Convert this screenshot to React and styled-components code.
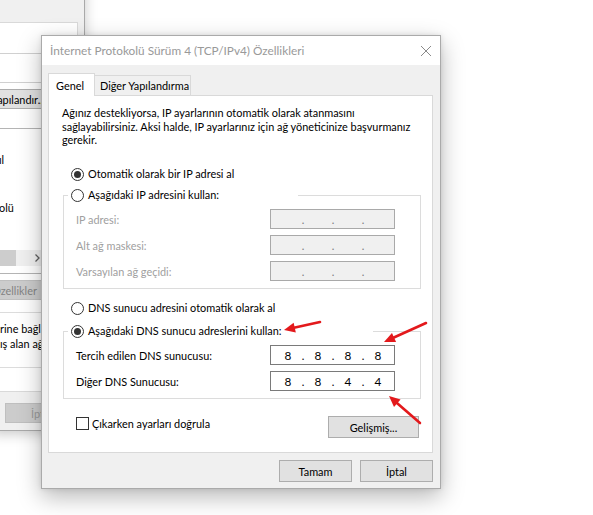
import { Fragment } from 'react'
import styled, { createGlobalStyle } from 'styled-components'

const UI_FONT = `Lato, 'Open Sans', 'Noto Sans', sans-serif`

const GlobalStyle = createGlobalStyle`
  *, *::before, *::after { box-sizing: border-box; }
  html, body { margin: 0; padding: 0; background: #ffffff; }
  body { font-family: ${UI_FONT}; font-size: 10.9px; color: #000; }
`

const ipFields = ['IP adresi:', 'Alt ağ maskesi:', 'Varsayılan ağ geçidi:']

const dnsFields = [
  { label: 'Tercih edilen DNS sunucusu:', octets: ['8', '8', '8', '8'] },
  { label: 'Diğer DNS Sunucusu:', octets: ['8', '8', '4', '4'] },
]

// tails of the adapter items that stick out from under the front dialog
const adapterItems = ['', 'ıl', '', '', 'olü', '']

const annotations = [
  { from: [320, 322], to: [284, 330] },
  { from: [426, 323], to: [384, 342] },
  { from: [420, 423], to: [389, 396] },
]

function Radio({ checked, children }) {
  return (
    <RadioLabel>
      <RadioDot $checked={checked} />
      <span>{children}</span>
    </RadioLabel>
  )
}

function IpField({ octets, disabled }) {
  const parts = octets || ['', '', '', '']
  return (
    <IpBox $disabled={disabled}>
      {parts.map((o, i) => (
        <Fragment key={i}>
          {i > 0 && <IpDot $disabled={disabled}>.</IpDot>}
          <Octet>{o}</Octet>
        </Fragment>
      ))}
    </IpBox>
  )
}

function Arrow({ from, to }) {
  const [x1, y1] = from
  const [x2, y2] = to
  const len = Math.hypot(x2 - x1, y2 - y1)
  const ux = (x2 - x1) / len
  const uy = (y2 - y1) / len
  const head = 11
  const half = 5
  const bx = x2 - ux * head
  const by = y2 - uy * head
  const points = [
    [x2, y2],
    [bx - uy * half, by + ux * half],
    [bx + uy * half, by - ux * half],
  ]
    .map((p) => p.join(','))
    .join(' ')
  return (
    <g>
      <line x1={x1} y1={y1} x2={bx + ux * 2} y2={by + uy * 2} stroke="#e3191c" strokeWidth="2.6" strokeLinecap="round" />
      <polygon points={points} fill="#e3191c" />
    </g>
  )
}

export default function App() {
  return (
    <>
      <GlobalStyle />
      <Desktop>
        <BackWindow>
          <BackPanel>
            <AdapterBox />
            <ConfigureButton>Yapılandır...</ConfigureButton>
            <ListView>
              {adapterItems.map((tail, i) => (
                <ListRow key={i}>{tail}</ListRow>
              ))}
              <HScroll>
                <ScrollThumb />
                <ScrollArrow>
                  <svg width="5" height="8" viewBox="0 0 5 8">
                    <path d="M0.5 0.5 L4 4 L0.5 7.5" fill="none" stroke="#606060" strokeWidth="1.3" />
                  </svg>
                </ScrollArrow>
              </HScroll>
            </ListView>
            <PropertiesButton>Özellikler</PropertiesButton>
            <DescGroup>
              rine bağlı ağlar arasında
              <br />
              ış alan ağ protokolü.
            </DescGroup>
          </BackPanel>
          <BackCancel>İptal</BackCancel>
        </BackWindow>

        <Dialog>
          <TitleBar>
            <Title>İnternet Protokolü Sürüm 4 (TCP/IPv4) Özellikleri</Title>
            <CloseButton>
              <svg width="10" height="10" viewBox="0 0 10 10">
                <path d="M0 0 L10 10 M10 0 L0 10" stroke="#8a8a8a" strokeWidth="1" />
              </svg>
            </CloseButton>
          </TitleBar>

          <Body>
            <Tabs>
              <Tab $active>Genel</Tab>
              <Tab>Diğer Yapılandırma</Tab>
            </Tabs>

            <TabPanel>
              <Intro>
                Ağınız destekliyorsa, IP ayarlarının otomatik olarak atanmasını
                <br />
                sağlayabilirsiniz. Aksi halde, IP ayarlarınız için ağ yöneticinize başvurmanız
                <br />
                gerekir.
              </Intro>

              <OptionRow $gap={19.5}>
                <Radio checked>Otomatik olarak bir IP adresi al</Radio>
              </OptionRow>

              <GroupBox>
                <Legend $width={230}>
                  <Radio>Aşağıdaki IP adresini kullan:</Radio>
                </Legend>
                <FieldList>
                  {ipFields.map((label) => (
                    <FieldRow key={label}>
                      <FieldLabel $disabled>{label}</FieldLabel>
                      <IpField disabled />
                    </FieldRow>
                  ))}
                </FieldList>
              </GroupBox>

              <OptionRow $gap={11}>
                <Radio>DNS sunucu adresini otomatik olarak al</Radio>
              </OptionRow>

              <GroupBox $gap={15}>
                <Legend $width={305}>
                  <Radio checked>Aşağıdaki DNS sunucu adreslerini kullan:</Radio>
                </Legend>
                <FieldList>
                  {dnsFields.map((f) => (
                    <FieldRow key={f.label}>
                      <FieldLabel>{f.label}</FieldLabel>
                      <IpField octets={f.octets} />
                    </FieldRow>
                  ))}
                </FieldList>
              </GroupBox>

              <PanelFooter>
                <CheckLabel>
                  <CheckBox />
                  <span>Çıkarken ayarları doğrula</span>
                </CheckLabel>
                <AdvancedButton>Gelişmiş...</AdvancedButton>
              </PanelFooter>
            </TabPanel>

            <ButtonRow>
              <DialogButton>Tamam</DialogButton>
              <DialogButton>İptal</DialogButton>
            </ButtonRow>
          </Body>
        </Dialog>

        <Overlay width="593" height="515" viewBox="0 0 593 515">
          {annotations.map((a, i) => (
            <Arrow key={i} from={a.from} to={a.to} />
          ))}
        </Overlay>
      </Desktop>
    </>
  )
}

const Desktop = styled.div`
  position: relative;
  width: 593px;
  height: 515px;
  overflow: hidden;
  background: #ffffff;
`

/* ---- Ethernet properties window behind ---- */

const BackWindow = styled.div`
  position: absolute;
  left: -8px;
  top: -40px;
  width: 93px;
  display: flex;
  flex-direction: column;
  align-items: flex-start;
  padding: 61px 6px 7px;
  background: #f0f0f0;
  border: 1px solid #a9a9a9;
  box-shadow: 0 3px 12px rgba(0, 0, 0, 0.22);
`

const BackPanel = styled.div`
  align-self: stretch;
  display: flex;
  flex-direction: column;
  align-items: flex-start;
  padding-bottom: 23px;
  background: #ffffff;
  border: 1px solid #d9d9d9;
  overflow: hidden;
`

const AdapterBox = styled.div`
  margin: 30px 0 0 -10px;
  width: 90px;
  height: 30px;
  border: 1px solid #d0d0d0;
`

const BackButton = styled.div`
  display: flex;
  align-items: center;
  justify-content: center;
  flex: none;
  width: 75px;
  height: 20px;
  border: 1px solid #adadad;
  background: #e1e1e1;
  white-space: nowrap;
`

const ConfigureButton = styled(BackButton)`
  margin: 6px 0 0 -19px;
`

const PropertiesButton = styled(BackButton)`
  margin: 6px 0 0 -23px;
  border-color: #bfbfbf;
  background: #cccccc;
  color: #838383;
`

const BackCancel = styled(BackButton)`
  width: 73px;
  margin: 11px 0 0 6px;
  border-color: #bfbfbf;
  background: #cccccc;
  color: #9a9a9a;
`

const ListView = styled.div`
  display: flex;
  flex-direction: column;
  flex: none;
  width: 56px;
  height: 146px;
  margin: 19px 0 0 -10px;
  padding-top: 7px;
  border: 1px solid #b4b4b4;
  background: #ffffff;
`

const ListRow = styled.div`
  height: 16px;
  line-height: 16px;
  padding-left: 8px;
  white-space: nowrap;
`

const HScroll = styled.div`
  display: flex;
  height: 16px;
  margin: auto 0 7px;
  background: #f0f0f0;
`

const ScrollThumb = styled.div`
  width: 25px;
  background: #cdcdcd;
`

const ScrollArrow = styled.div`
  display: flex;
  align-items: center;
  justify-content: center;
  width: 16px;
  margin-left: auto;
`

const DescGroup = styled.div`
  flex: none;
  width: 90px;
  margin: 12px 0 0 -10px;
  padding: 8px 0 16px 9px;
  border: 1px solid #dcdcdc;
  line-height: 15px;
  white-space: nowrap;
`

/* ---- TCP/IPv4 properties dialog ---- */

const Dialog = styled.section`
  position: absolute;
  left: 41px;
  top: 35px;
  width: 400px;
  display: flex;
  flex-direction: column;
  background: #f0f0f0;
  border: 1px solid #aaaaaa;
  box-shadow: 0 8px 22px rgba(0, 0, 0, 0.28), 0 0 5px rgba(0, 0, 0, 0.1);
`

const TitleBar = styled.header`
  display: flex;
  align-items: center;
  height: 29px;
  padding-left: 8px;
  background: #ffffff;
`

const Title = styled.div`
  flex: 1;
  color: #999999;
  font-size: 11.8px;
  white-space: nowrap;
`

const CloseButton = styled.div`
  display: flex;
  align-items: center;
  justify-content: center;
  width: 28px;
  height: 29px;
`

const Body = styled.div`
  display: flex;
  flex-direction: column;
  padding: 8px 7px 6px 6px;
`

const Tabs = styled.div`
  display: flex;
  align-items: flex-end;
  height: 23px;
  margin-bottom: -1px;
`

const Tab = styled.div`
  position: relative;
  display: flex;
  align-items: center;
  height: ${(p) => (p.$active ? 23 : 21)}px;
  width: ${(p) => (p.$active ? 47 : 97)}px;
  margin-left: ${(p) => (p.$active ? 0 : -1)}px;
  padding-left: ${(p) => (p.$active ? 7 : 5)}px;
  border: 1px solid #d9d9d9;
  border-bottom: ${(p) => (p.$active ? 'none' : '1px solid #d9d9d9')};
  background: ${(p) => (p.$active ? '#ffffff' : '#f0f0f0')};
  z-index: ${(p) => (p.$active ? 2 : 0)};
  white-space: nowrap;
`

const TabPanel = styled.div`
  position: relative;
  z-index: 1;
  display: flex;
  flex-direction: column;
  padding: 10px 11px 14px 13px;
  background: #ffffff;
  border: 1px solid #d9d9d9;
`

const Intro = styled.p`
  margin: 0;
  line-height: 13.5px;
  white-space: nowrap;
`

const OptionRow = styled.div`
  display: flex;
  margin: ${(p) => p.$gap}px 0 0 9px;
`

const RadioLabel = styled.label`
  display: flex;
  align-items: center;
  gap: 4px;
  height: 16px;
  line-height: 16px;
  white-space: nowrap;
`

const RadioDot = styled.span`
  display: flex;
  align-items: center;
  justify-content: center;
  flex: none;
  width: 13px;
  height: 13px;
  border-radius: 50%;
  border: 1px solid #333333;
  background: #ffffff;

  &::after {
    content: '';
    display: ${(p) => (p.$checked ? 'block' : 'none')};
    width: 7px;
    height: 7px;
    border-radius: 50%;
    background: #333333;
  }
`

const GroupBox = styled.div`
  display: flex;
  flex-direction: column;
  margin: ${(p) => p.$gap || 13}px 0 0 1px;
  padding: 0 25px 7px 12px;
  border: 1px solid #dcdcdc;
`

const Legend = styled.div`
  display: flex;
  width: ${(p) => p.$width}px;
  height: 16px;
  margin: -9px 0 0 -8px;
  padding-left: 3px;
  background: #ffffff;
`

const FieldList = styled.div`
  display: flex;
  flex-direction: column;
  gap: 6px;
  margin-top: 6px;
`

const FieldRow = styled.div`
  display: flex;
  align-items: center;
  justify-content: space-between;
  height: 20px;
`

const FieldLabel = styled.span`
  color: ${(p) => (p.$disabled ? '#a0a0a0' : '#000000')};
  white-space: nowrap;
`

const IpBox = styled.div`
  display: flex;
  align-items: center;
  width: 125px;
  height: 20px;
  padding-left: 4px;
  border: 1px solid ${(p) => (p.$disabled ? '#a9a9a9' : '#7a7a7a')};
  background: ${(p) => (p.$disabled ? '#f0f0f0' : '#ffffff')};
`

const Octet = styled.span`
  width: 26px;
  text-align: center;
  font-size: 11.8px;
`

const IpDot = styled.span`
  width: 4px;
  text-align: center;
  color: ${(p) => (p.$disabled ? '#7a7a7a' : '#000000')};
`

const PanelFooter = styled.div`
  display: flex;
  justify-content: space-between;
  align-items: flex-start;
  margin: 17px 2px 0 14px;
`

const CheckLabel = styled.label`
  display: flex;
  align-items: center;
  gap: 3px;
  height: 16px;
  margin-top: -1px;
  white-space: nowrap;
`

const CheckBox = styled.span`
  flex: none;
  width: 13px;
  height: 13px;
  border: 1px solid #333333;
  background: #ffffff;
`

const DialogButton = styled.div`
  display: flex;
  align-items: center;
  justify-content: center;
  width: 73px;
  height: 22px;
  border: 1px solid #adadad;
  background: #e1e1e1;
  white-space: nowrap;
`

const AdvancedButton = styled(DialogButton)`
  width: 91px;
`

const ButtonRow = styled.div`
  display: flex;
  justify-content: flex-end;
  gap: 8px;
  margin-top: 7px;
`

const Overlay = styled.svg`
  position: absolute;
  left: 0;
  top: 0;
  pointer-events: none;
  z-index: 5;
`
